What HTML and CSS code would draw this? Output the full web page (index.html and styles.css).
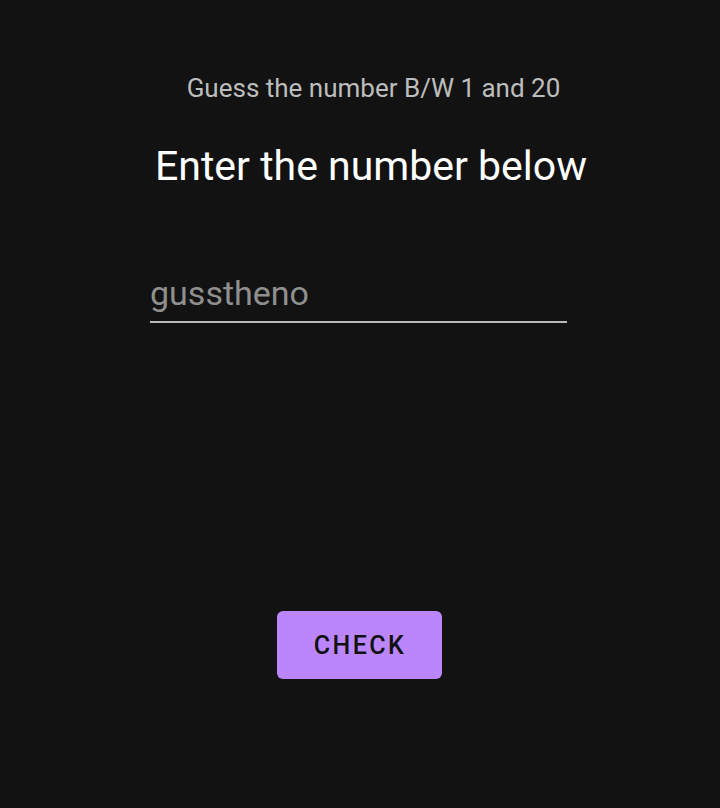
FILE: index.html
```html
<!DOCTYPE html>
<html>
<head>
<meta charset="utf-8">
<link rel="stylesheet" href="styles.css">
</head>
<body>
<main class="screen">
  <p class="subtitle">Guess the number B/W 1 and 20</p>
  <h1 class="title">Enter the number below</h1>
  <div class="field">
    <input class="field-input" type="text" placeholder="gusstheno">
  </div>
  <button class="check-btn" type="button">CHECK</button>
</main>
</body>
</html>
```
FILE: styles.css
```css
html, body {
  margin: 0;
  padding: 0;
  background: #121212;
  height: 100%;
}
.screen {
  display: flex;
  flex-direction: column;
  align-items: center;
  font-family: Roboto, "Noto Sans", sans-serif;
  padding-top: 72px;
}
.subtitle {
  margin: 0 0 0 27px;
  font-size: 26px;
  line-height: 32px;
  color: #bdbdbd;
}
.title {
  margin: 40px 0 0 22px;
  font-size: 41px;
  font-weight: 400;
  line-height: 44px;
  color: #ffffff;
}
.field {
  margin: 85px 3px 0 0;
  width: 417px;
  border-bottom: 2px solid #b9b9b9;
}
.field-input {
  display: block;
  width: 100%;
  box-sizing: border-box;
  background: transparent;
  border: none;
  outline: none;
  font-family: Roboto, "Noto Sans", sans-serif;
  font-size: 34px;
  line-height: 40px;
  height: 40px;
  padding: 0;
  margin-bottom: 8px;
  color: #ffffff;
}
.field-input::placeholder {
  color: #8f8f8f;
}
.check-btn {
  margin: 288px 2px 0 0;
  width: 165px;
  height: 68px;
  border: none;
  border-radius: 6px;
  background: #bb86fc;
  color: #111111;
  font-family: Roboto, "Noto Sans", sans-serif;
  font-size: 25px;
  font-weight: 500;
  letter-spacing: 2.4px;
  padding: 0 0 0 2px;
}
```
